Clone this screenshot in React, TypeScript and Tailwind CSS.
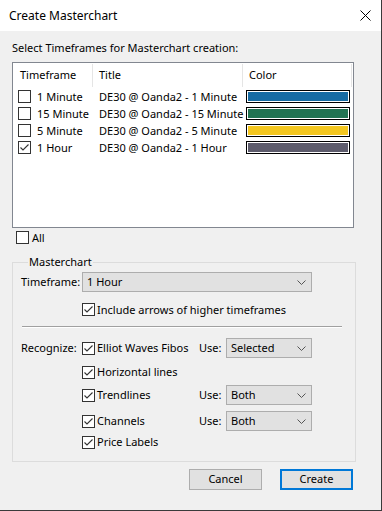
import React from "react";

const font = { fontFamily: '"Noto Sans", "Open Sans", sans-serif' };

function Check({ checked }: { checked?: boolean }) {
  return (
    <div className="w-[13px] h-[13px] border border-[#333333] bg-white flex items-center justify-center shrink-0">
      {checked && (
        <svg width="11" height="11" viewBox="0 0 11 11">
          <path d="M1.5 5.5 L4 8 L9.5 2.5" stroke="#333333" strokeWidth="1.1" fill="none" />
        </svg>
      )}
    </div>
  );
}

function Chevron() {
  return (
    <svg width="9" height="5" viewBox="0 0 9 5" className="shrink-0">
      <path d="M0.5 0.5 L4.5 4.5 L8.5 0.5" stroke="#555555" strokeWidth="1" fill="none" />
    </svg>
  );
}

function Select({ value, w }: { value: string; w: string }) {
  return (
    <div className={`h-[20px] ${w} shrink-0 bg-[#e1e1e1] border border-[#adadad] flex items-center pl-[4px] pr-[5px]`}>
      <span className="flex-1 leading-[16px] whitespace-nowrap">{value}</span>
      <Chevron />
    </div>
  );
}

const rows = [
  { tf: "1 Minute", title: "DE30 @ Oanda2 - 1 Minute", color: "#166ba3", checked: false },
  { tf: "15 Minute", title: "DE30 @ Oanda2 - 15 Minute", color: "#217352", checked: false },
  { tf: "5 Minute", title: "DE30 @ Oanda2 - 5 Minute", color: "#f4c71f", checked: false },
  { tf: "1 Hour", title: "DE30 @ Oanda2 - 1 Hour", color: "#5d5b6c", checked: true },
];

function RecRow({ label, mt, use, first }: { label: string; mt: string; use?: string; first?: boolean }) {
  return (
    <div className={`${mt} h-[20px] flex items-center whitespace-nowrap`}>
      <span className="w-[61px] shrink-0">{first ? "Recognize:" : ""}</span>
      <div className="w-[117px] shrink-0 flex items-center gap-[2px]">
        <Check checked />
        <span className="leading-[16px]">{label}</span>
      </div>
      {use && (
        <>
          <span className="w-[27px] shrink-0">Use:</span>
          <Select value={use} w="w-[86px]" />
        </>
      )}
    </div>
  );
}

export default function App() {
  return (
    <div
      style={font}
      className="w-[382px] h-[511px] bg-[#f0f0f0] border-r border-b border-[#3a3a3a] text-[11px] text-black flex flex-col overflow-hidden"
    >
      <div className="h-[31px] bg-white flex items-center pl-[9px] pr-[10px] shrink-0">
        <span className="flex-1 text-[12px]">Create Masterchart</span>
        <svg width="11" height="11" viewBox="0 0 11 11">
          <path d="M0.5 0.5 L10.5 10.5 M10.5 0.5 L0.5 10.5" stroke="#000" strokeWidth="1" />
        </svg>
      </div>
      <div className="px-[12px] flex flex-col">
        <div className="mt-[9px] h-[16px] leading-[16px] whitespace-nowrap">Select Timeframes for Masterchart creation:</div>
        <div className="mt-[6px] w-[342px] h-[166px] bg-white border border-[#828790] flex flex-col">
          <div className="h-[25px] flex items-center">
            <div className="w-[80px] shrink-0 h-[23px] border-r border-[#e5e5e5] pl-[7px] flex items-center">Timeframe</div>
            <div className="w-[150px] shrink-0 h-[23px] border-r border-[#e5e5e5] pl-[6px] flex items-center">Title</div>
            <div className="w-[109px] shrink-0 h-[23px] border-r border-[#e5e5e5] pl-[6px] flex items-center">Color</div>
          </div>
          {rows.map((r) => (
            <div key={r.tf} className="h-[17px] flex items-center whitespace-nowrap">
              <div className="w-[80px] shrink-0 pl-[5px] flex items-center gap-[6px]">
                <Check checked={r.checked} />
                <span className="leading-[16px]">{r.tf}</span>
              </div>
              <div className="w-[150px] shrink-0 pl-[6px] leading-[16px]">{r.title}</div>
              <div className="w-[109px] shrink-0 pl-[3px]">
                <div className="w-[104px] h-[13px] border border-black p-[1px] bg-white">
                  <div className="w-full h-full" style={{ backgroundColor: r.color }} />
                </div>
              </div>
            </div>
          ))}
        </div>
        <div className="mt-[3px] ml-[4px] h-[13px] flex items-center gap-[3px]">
          <Check />
          <span className="leading-[16px]">All</span>
        </div>
        <fieldset className="mt-[10px] w-[344px] border border-[#dcdcdc] pl-[8px] pb-[9px]">
          <legend className="ml-[7px] px-[1px] h-[16px] leading-[16px]">Masterchart</legend>
          <div className="mt-[2px] h-[20px] flex items-center whitespace-nowrap">
            <span className="w-[61px] shrink-0">Timeframe:</span>
            <Select value="1 Hour" w="w-[230px]" />
          </div>
          <div className="mt-[11px] ml-[61px] h-[13px] flex items-center gap-[2px] whitespace-nowrap">
            <Check checked />
            <span className="leading-[16px]">Include arrows of higher timeframes</span>
          </div>
          <div className="mt-[10px] ml-[1px] w-[320px] h-[2px] border-t border-[#a0a0a0] border-b border-b-white" />
          <RecRow first label="Elliot Waves Fibos" mt="mt-[10px]" use="Selected" />
          <RecRow label="Horizontal lines" mt="mt-[4px]" />
          <RecRow label="Trendlines" mt="mt-[3px]" use="Both" />
          <RecRow label="Channels" mt="mt-[6px]" use="Both" />
          <RecRow label="Price Labels" mt="mt-[1px]" />
        </fieldset>
        <div className="mt-[7px] mr-[16px] flex justify-end gap-[18px]">
          <div className="w-[73px] h-[21px] bg-[#e1e1e1] border border-[#adadad] flex items-center justify-center">Cancel</div>
          <div className="w-[73px] h-[21px] bg-[#e1e1e1] border-2 border-[#0078d7] flex items-center justify-center">Create</div>
        </div>
      </div>
    </div>
  );
}
